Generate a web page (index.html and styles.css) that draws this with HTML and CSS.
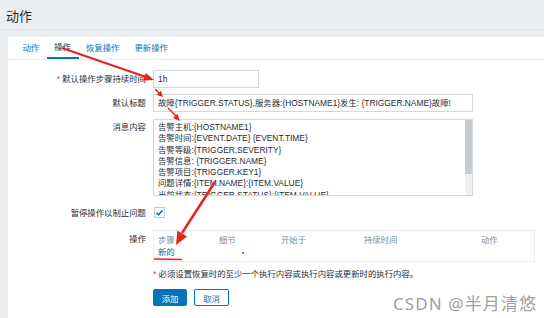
FILE: index.html
```html
<!DOCTYPE html>
<html lang="zh-CN">
<head>
    <meta charset="UTF-8">
    <title>动作</title>
    <link rel="stylesheet" href="styles.css">
</head>
<body>
<div class="page">
    <div class="main">
        <div class="header">动作</div>
        <div class="panel">
            <div class="tabs">
                <span class="tab">动作</span>
                <span class="tab active">操作</span>
                <span class="tab">恢复操作</span>
                <span class="tab">更新操作</span>
            </div>
            <div class="form">
                <div class="row">
                    <div class="label"><span class="req">*</span> 默认操作步骤持续时间</div>
                    <div class="input short">1h</div>
                </div>
                <div class="row">
                    <div class="label">默认标题</div>
                    <div class="input wide">故障{TRIGGER.STATUS},服务器:{HOSTNAME1}发生: {TRIGGER.NAME}故障!</div>
                </div>
                <div class="row">
                    <div class="label">消息内容</div>
                    <div class="textarea">
                        <div class="lines">
                            <div>告警主机:{HOSTNAME1}</div>
                            <div>告警时间:{EVENT.DATE} {EVENT.TIME}</div>
                            <div>告警等级:{TRIGGER.SEVERITY}</div>
                            <div>告警信息: {TRIGGER.NAME}</div>
                            <div>告警项目:{TRIGGER.KEY1}</div>
                            <div>问题详情:{ITEM.NAME}:{ITEM.VALUE}</div>
                            <div>当前状态:{TRIGGER.STATUS}:{ITEM.VALUE}</div>
                        </div>
                        <div class="scrollbar"><div class="thumb"></div></div>
                    </div>
                </div>
                <div class="row check-row">
                    <div class="label">暂停操作以制止问题</div>
                    <div class="checkbox">
                        <svg width="9" height="9" viewBox="0 0 9 9"><path d="M1.5 4.8 L3.6 6.8 L7.6 2.2" fill="none" stroke="#0275b8" stroke-width="1.5"/></svg>
                    </div>
                </div>
                <div class="row">
                    <div class="label">操作</div>
                    <div class="ops">
                        <div class="ops-head">
                            <span class="c1">步骤</span>
                            <span class="c2">细节</span>
                            <span class="c3">开始于</span>
                            <span class="c4">持续时间</span>
                            <span class="c5">动作</span>
                        </div>
                        <div><span class="link">新的</span></div>
                    </div>
                </div>
                <div class="note"><span class="req">*</span> 必须设置恢复时的至少一个执行内容或执行内容或更新时的执行内容。</div>
                <div class="buttons">
                    <button class="btn primary">添加</button>
                    <button class="btn">取消</button>
                </div>
            </div>
        </div>
    </div>
    <div class="side"></div>

    <!-- 截图上的红色标注 -->
    <svg class="marks" width="553" height="318" viewBox="0 0 553 318">
        <g fill="#e8231c" stroke="#e8231c">
            <line x1="62" y1="48" x2="146" y2="77" stroke-width="2"/>
            <polygon points="154,80 143.2,80.5 145.9,72.9" stroke="none"/>
            <line x1="155" y1="89" x2="160" y2="94" stroke-width="1.5"/>
            <polygon points="163,97 156.7,94.9 160.9,90.7" stroke="none"/>
            <line x1="168" y1="108" x2="176" y2="116" stroke-width="1.5"/>
            <polygon points="180,121 173,117.9 177.4,113.8" stroke="none"/>
            <line x1="215" y1="182" x2="182" y2="233" stroke-width="2.5"/>
            <polygon points="176,245 177.4,230.5 187,236.5" stroke="none"/>
            <line x1="154" y1="259" x2="182" y2="259.5" stroke-width="1.5"/>
            <circle cx="243" cy="253" r="1" stroke="none"/>
        </g>
    </svg>
    <div class="watermark">CSDN @半月清悠</div>
</div>
</body>
</html>
```

FILE: styles.css
```css
body {
    margin: 0;
    font-family: "Liberation Sans", "Noto Sans CJK SC", sans-serif;
    font-size: 8.4px;
    color: #1f2c33;
    background-color: #fff;
}

.page {
    position: relative;
    display: flex;
    width: 553px;
    height: 318px;
    overflow: hidden;
}

.main {
    width: 544px;
    display: flex;
    flex-direction: column;
    background-color: #ebeef0;
}

.side {
    flex: 1;
    background-color: #fff;
}

.header {
    height: 30px;
    line-height: 34px;
    padding-left: 6px;
    font-size: 13px;
    border-bottom: 1px solid #dfe3e6;
    box-sizing: border-box;
}

.panel {
    flex: 1;
    margin: 7px 0 0 8px;
    background-color: #fff;
}

.tabs {
    display: flex;
    height: 22px;
    padding-left: 7px;
    border-bottom: 1px solid #ebeef0;
}

.tab {
    padding: 0 7.5px;
    line-height: 22px;
    color: #0275b8;
}

.tab.active {
    color: #1f2c33;
    line-height: 20px;
    border-bottom: 2px solid #0275b8;
}

.form {
    padding-top: 10px;
    display: flex;
    flex-direction: column;
}

.row {
    display: flex;
    gap: 7px;
    margin-bottom: 6px;
}

.label {
    width: 138px;
    text-align: right;
    line-height: 18px;
    flex-shrink: 0;
}

.req {
    color: #e33734;
}

.input {
    height: 18px;
    line-height: 16px;
    padding: 0 4px;
    border: 1px solid #d3d8db;
    box-sizing: border-box;
    white-space: nowrap;
    overflow: hidden;
}

.input.short {
    width: 106px;
}

.input.wide {
    width: 320px;
}

.textarea {
    display: flex;
    width: 320px;
    height: 77px;
    border: 1px solid #d3d8db;
    box-sizing: border-box;
    margin-top: 1px;
}

.lines {
    flex: 1;
    padding: 2px 4px 0;
    line-height: 11.3px;
    overflow: hidden;
    white-space: nowrap;
}

.scrollbar {
    width: 7px;
    background-color: #f1f1f1;
}

.thumb {
    height: 54px;
    background-color: #c5cdd2;
}

.check-row {
    margin-top: 2px;
    margin-bottom: 8px;
}

.checkbox {
    width: 11px;
    height: 11px;
    margin: 3px 0 0 1px;
    border: 1px solid #c0c8cd;
    box-sizing: border-box;
    display: flex;
    align-items: center;
    justify-content: center;
}

.ops {
    width: 382px;
    height: 32px;
    border: 1px solid #ebeef0;
    box-sizing: border-box;
    padding: 3px 4px;
    line-height: 12px;
}

.ops-head {
    display: flex;
    color: #768d99;
}

.ops-head .c1 { width: 61px; }
.ops-head .c2 { width: 62px; }
.ops-head .c3 { width: 83px; }
.ops-head .c4 { width: 117px; }

.link {
    color: #0275b8;
}

.note {
    margin: 0 0 0 145px;
    line-height: 12px;
}

.buttons {
    display: flex;
    gap: 7px;
    margin: 9px 0 0 145px;
}

.btn {
    height: 17px;
    width: 35px;
    padding: 0;
    font-family: inherit;
    font-size: 8.4px;
    color: #0275b8;
    background-color: #fff;
    border: 1px solid #0275b8;
    border-radius: 2px;
}

.btn.primary {
    width: 34px;
    color: #fff;
    background-color: #0275b8;
}

.marks {
    position: absolute;
    left: 0;
    top: 0;
    pointer-events: none;
}

.watermark {
    position: absolute;
    left: 393px;
    top: 290px;
    font-family: "Noto Sans", "Noto Sans CJK SC", sans-serif;
    font-size: 17px;
    letter-spacing: 1.1px;
    color: #a0a0a0;
    text-shadow: 0 0 2px #fff;
}
```
